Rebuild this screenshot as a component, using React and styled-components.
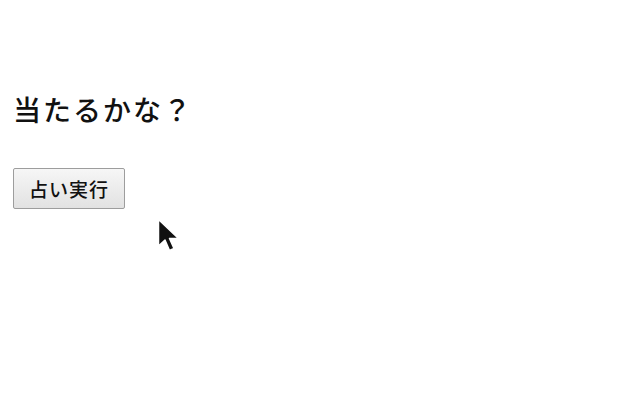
import styled, { createGlobalStyle } from 'styled-components';

const GlobalStyle = createGlobalStyle`
  html, body {
    margin: 0;
    padding: 0;
    background: #ffffff;
  }
  body {
    font-family: "Noto Sans CJK JP", "Noto Sans", sans-serif;
    color: #111;
  }
`;

const Page = styled.div`
  position: relative;
  width: 640px;
  height: 400px;
  padding: 88px 0 0 13px;
  box-sizing: border-box;
`;

const Title = styled.h1`
  margin: 0 0 38px 0;
  font-size: 28px;
  font-weight: 500;
  line-height: 42px;
  letter-spacing: 2px;
`;

const RunButton = styled.button`
  width: 112px;
  height: 41px;
  padding: 0;
  border: 1px solid #9d9d9d;
  border-radius: 2px;
  background: linear-gradient(#f6f6f6, #e2e2e2);
  font-family: "Noto Sans CJK JP", sans-serif;
  font-size: 19px;
  font-weight: 500;
  letter-spacing: 1px;
  color: #111;
  cursor: pointer;
`;

const Cursor = styled.svg`
  position: absolute;
  left: 157px;
  top: 218px;
`;

export default function App() {
  return (
    <>
      <GlobalStyle />
      <Page>
        <Title>当たるかな？</Title>
        <RunButton>占い実行</RunButton>
        <Cursor width="24" height="38" viewBox="0 0 24 38">
          <path
            d="M1.5 1.5 L1.5 28 L8 22 L12.5 32.5 L17 30.5 L12.5 20.5 L21.5 20.5 Z"
            fill="#111"
            stroke="#fff"
            strokeWidth="1.5"
            strokeLinejoin="round"
          />
        </Cursor>
      </Page>
    </>
  );
}
